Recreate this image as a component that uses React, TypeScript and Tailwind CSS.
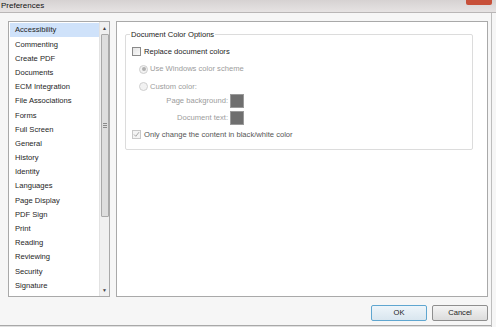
import React from 'react';

const ITEMS = [
  'Accessibility', 'Commenting', 'Create PDF', 'Documents', 'ECM Integration',
  'File Associations', 'Forms', 'Full Screen', 'General', 'History', 'Identity',
  'Languages', 'Page Display', 'PDF Sign', 'Print', 'Reading', 'Reviewing',
  'Security', 'Signature',
];

const Checkbox: React.FC<{ checked?: boolean; disabled?: boolean }> = ({ checked, disabled }) => (
  <span
    className={`flex h-[9px] w-[9px] items-center justify-center border ${
      disabled ? 'border-[#c8c8c8] bg-[#f4f4f4]' : 'border-[#8a8a8a] bg-gradient-to-br from-[#e4e4e4] to-[#fafafa]'
    }`}
  >
    {checked && (
      <svg width="7" height="7" viewBox="0 0 7 7">
        <path d="M1 3.5 L2.8 5.3 L6 1.2" fill="none" stroke="#a8a8a8" strokeWidth="1" />
      </svg>
    )}
  </span>
);

const Radio: React.FC<{ checked?: boolean }> = ({ checked }) => (
  <span className="flex h-[9px] w-[9px] items-center justify-center rounded-full border border-[#cfcfcf] bg-[#f2f2f2]">
    {checked && <span className="h-[4px] w-[4px] rounded-full bg-[#b0b0b0]" />}
  </span>
);

export default function App() {
  return (
    <div
      className="flex h-[327px] w-[496px] flex-col overflow-hidden bg-[#f6f6f6] text-[7.6px] text-[#1e1e1e]"
      style={{ fontFamily: '"Liberation Sans", Arial, sans-serif' }}
    >
      {/* title bar */}
      <div className="relative flex h-[13px] shrink-0 items-center border-b border-[#b9b6b6] bg-gradient-to-b from-[#d6d2d2] to-[#e6e3e3] pl-[1px]">
        <span className="text-[8px] text-[#111]">Preferences</span>
        <span className="absolute right-[4px] top-0 h-[5px] w-[26px] rounded-b-[2px] bg-[#c7503a]" />
      </div>

      <div className="flex flex-1 flex-col border-r border-[#bdbdbd] mr-[4px]">
        <div className="mt-[8px] ml-[8px] flex h-[276px] gap-[6px]">
          {/* list box */}
          <div className="flex w-[102px] border border-[#a9a9a9] bg-white">
            <div className="flex-1 overflow-hidden pt-[1px] pl-[1px]">
              {ITEMS.map((item, i) => (
                <div
                  key={item}
                  className={`flex h-[14.2px] items-center pl-[5px] ${i === 0 ? 'bg-[#cfe2fa]' : ''}`}
                >
                  {item}
                </div>
              ))}
            </div>
            <div className="flex w-[10px] flex-col items-center bg-[#f0f0f0] border-l border-[#e2e2e2]">
              <span className="mt-[3px] text-[5px] leading-[6px] text-[#444]">▲</span>
              <div className="mt-[3px] flex h-[183px] w-[8px] items-center justify-center rounded-[1px] border border-[#a9a9a9] bg-[#dedede]">
                <div className="flex flex-col gap-[1px]">
                  <span className="block h-[1px] w-[4px] bg-[#8a8a8a]" />
                  <span className="block h-[1px] w-[4px] bg-[#8a8a8a]" />
                  <span className="block h-[1px] w-[4px] bg-[#8a8a8a]" />
                </div>
              </div>
              <span className="mt-auto mb-[3px] text-[5px] leading-[6px] text-[#444]">▼</span>
            </div>
          </div>

          {/* content panel */}
          <div className="w-[372px] border border-[#a9a9a9] bg-white pl-[8px] pr-[14px] pt-[12px]">
            <div className="relative h-[116px] rounded-[2px] border border-[#dcdcdc] pl-[6px] pt-[11px]">
              <span className="absolute -top-[6px] left-[4px] bg-white px-[1px] text-[#222]">Document Color Options</span>
              <div className="flex items-center gap-[3px]">
                <Checkbox />
                <span>Replace document colors</span>
              </div>
              <div className="mt-[6px] ml-[7px] flex items-center gap-[2px] text-[#9c9c9c]">
                <Radio checked />
                <span>Use Windows color scheme</span>
              </div>
              <div className="mt-[6px] ml-[7px] flex items-center gap-[2px] text-[#9c9c9c]">
                <Radio />
                <span>Custom color:</span>
              </div>
              <div className="mt-[2px] flex w-[112px] items-center justify-end gap-[2px] text-[#9c9c9c]">
                <span>Page background:</span>
                <span className="h-[14px] w-[14px] border border-[#9a9a9a] bg-[#6f6f6f]" />
              </div>
              <div className="mt-[3px] flex w-[112px] items-center justify-end gap-[2px] text-[#9c9c9c]">
                <span>Document text:</span>
                <span className="h-[14px] w-[14px] border border-[#9a9a9a] bg-[#6f6f6f]" />
              </div>
              <div className="mt-[4px] flex items-center gap-[3px] text-[#555]">
                <Checkbox checked disabled />
                <span>Only change the content in black/white color</span>
              </div>
            </div>
          </div>
        </div>

        {/* buttons */}
        <div className="mt-[8px] flex justify-end gap-[5px] pr-[3px]">
          <button className="h-[16px] w-[56px] rounded-[2px] border border-[#5fa6d0] bg-gradient-to-b from-[#eef5fa] to-[#d9e6ef] text-[7.6px] text-[#222]">
            OK
          </button>
          <button className="h-[16px] w-[56px] rounded-[2px] border border-[#8e8e8e] bg-gradient-to-b from-[#f4f4f4] to-[#dcdcdc] text-[7.6px] text-[#222]">
            Cancel
          </button>
        </div>
        <div className="mt-auto h-[2px] border-t border-[#a8a8a8] bg-[#e0e0e0]" />
      </div>
    </div>
  );
}
